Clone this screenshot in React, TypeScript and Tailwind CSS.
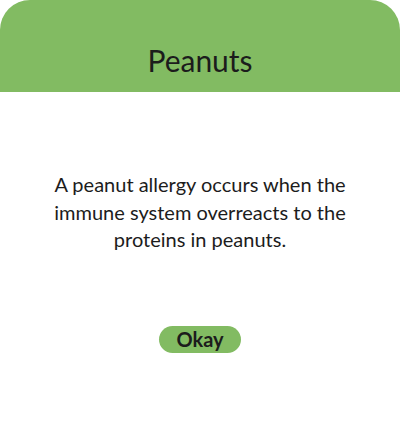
export default function App() {
  return (
    <div
      className="w-[400px] h-[433px] bg-white flex flex-col text-[#1c1c1c]"
      style={{ fontFamily: "Lato, 'Open Sans', sans-serif" }}
    >
      {/* Header */}
      <div className="h-[92px] bg-[#82bb62] rounded-t-[30px] flex items-end justify-center pb-[14px]">
        <h1 className="text-[30px] leading-[36px] font-normal">Peanuts</h1>
      </div>

      {/* Body */}
      <div className="flex flex-col items-center px-6 pt-[79px]">
        <p className="text-[20px] leading-[27.5px] text-center">
          A peanut allergy occurs when the
          <br />
          immune system overreacts to the
          <br />
          proteins in peanuts.
        </p>
        <button
          type="button"
          className="mt-[72px] w-[82px] h-[27px] rounded-full bg-[#82bb62] text-[20px] leading-[27px] font-bold"
        >
          Okay
        </button>
      </div>
    </div>
  );
}
